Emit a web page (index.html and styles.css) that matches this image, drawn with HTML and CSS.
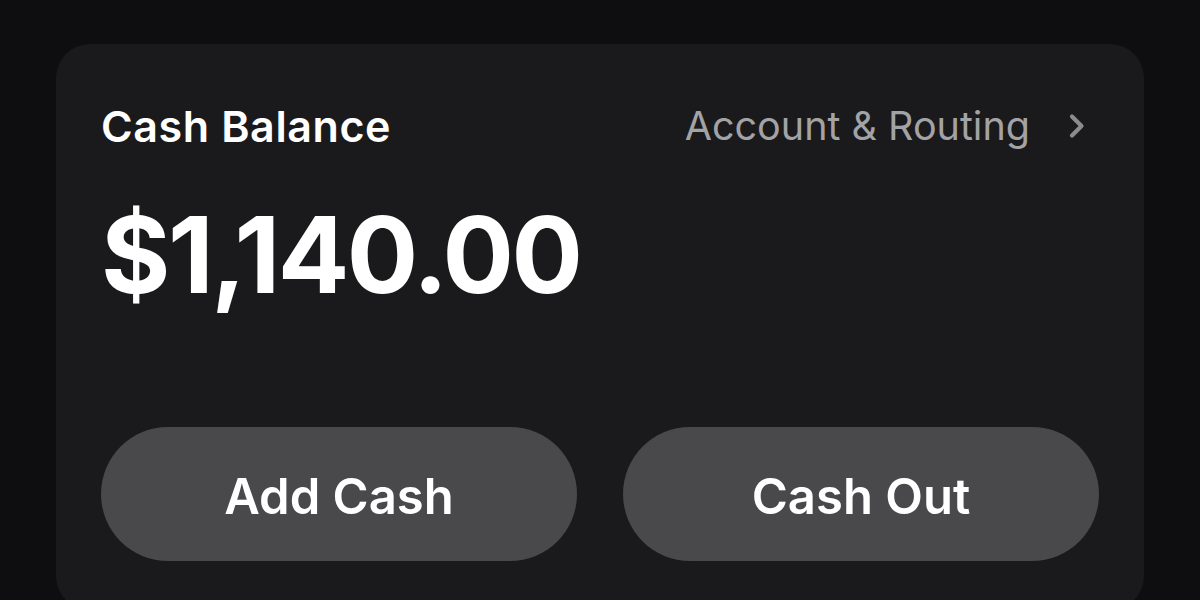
FILE: index.html
```html
<!DOCTYPE html>
<html lang="en">
<head>
	<meta charset="UTF-8">
	<title>Cash Balance</title>
	<link rel="stylesheet" href="styles.css">
</head>
<body>
	<div class="card">
		<div class="card-head">
			<div class="title">Cash Balance</div>
			<a href="javascript:;" class="routing">
				<span>Account &amp; Routing</span>
				<svg class="chevron" width="18" height="26" viewBox="0 0 18 26">
					<path d="M4 3.5 L13.5 13 L4 22.5" fill="none" stroke="#8b8b8d" stroke-width="4.2" stroke-linecap="round" stroke-linejoin="round"/>
				</svg>
			</a>
		</div>
		<div class="amount">$1,140.00</div>
		<div class="actions">
			<a href="javascript:;" class="btn">Add Cash</a>
			<a href="javascript:;" class="btn">Cash Out</a>
		</div>
	</div>
</body>
</html>
```
FILE: styles.css
```css
html, body {
	margin: 0;
	height: 100%;
	overflow: hidden;
}

body {
	background: #0e0e10;
	font-family: Inter, "Noto Sans", sans-serif;
	color: #fff;
	padding: 44px 56px 0 56px;
	box-sizing: border-box;
}

.card {
	background: #1a1a1c;
	border-radius: 34px;
	height: 566px;
	padding: 0 45px;
	display: flex;
	flex-direction: column;
}

.card-head {
	display: flex;
	justify-content: space-between;
	align-items: center;
	height: 48px;
	margin-top: 58px;
}

.title {
	font-size: 43px;
	font-weight: 600;
	letter-spacing: 0.6px;
}

.routing {
	display: flex;
	align-items: center;
	gap: 38px;
	color: #a3a3a5;
	text-decoration: none;
	font-size: 39.5px;
	font-weight: 400;
	margin-right: 13px;
}

.amount {
	margin-top: 50px;
	font-size: 106px;
	font-weight: 700;
	line-height: 110px;
	letter-spacing: -2.5px;
}

.actions {
	display: flex;
	gap: 46px;
	margin-top: 117px;
}

.btn {
	flex: 1;
	height: 134px;
	border-radius: 67px;
	background: #49494b;
	color: #fff;
	text-decoration: none;
	font-size: 49px;
	font-weight: 600;
	display: flex;
	align-items: center;
	justify-content: center;
	padding-top: 4px;
	box-sizing: border-box;
}
```
